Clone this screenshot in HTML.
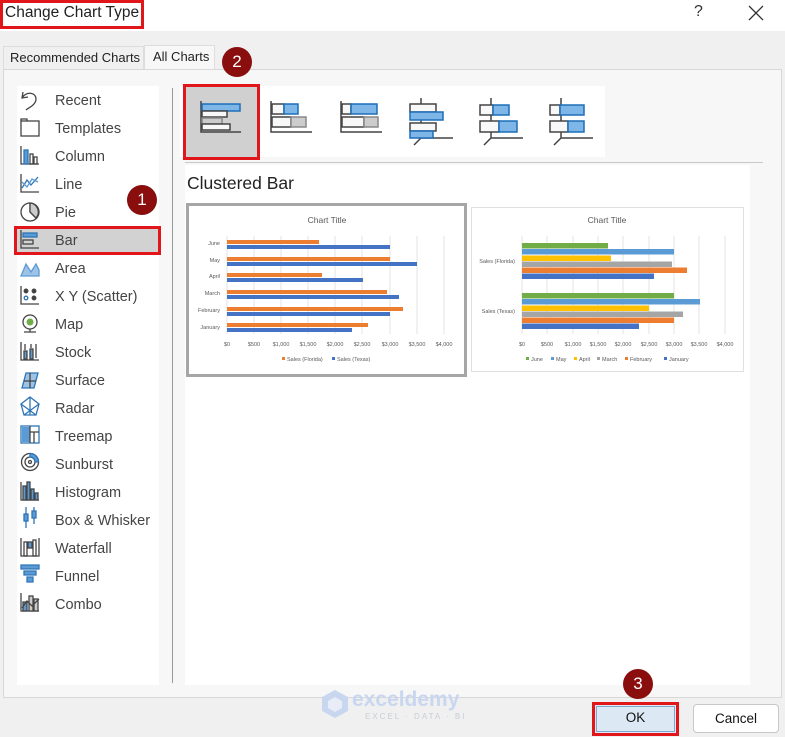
<!DOCTYPE html>
<html><head><meta charset="utf-8"><style>
*{margin:0;padding:0;box-sizing:border-box}
body{width:785px;height:737px;background:#f0f0f0;font-family:"Segoe UI","Liberation Sans",sans-serif;position:relative;overflow:hidden;color:#333}
.abs{position:absolute}
.item{position:absolute;left:55px;font-size:14.5px;color:#444;margin-top:2px}
.badge{position:absolute;width:30px;height:30px;border-radius:50%;background:#8b0e0e;color:#fff;font-size:17px;text-align:center;line-height:30px}
</style></head><body>
<div class="abs" style="left:0;top:0;width:785px;height:31px;background:#fff"></div>
<div class="abs" style="left:0;top:0;width:144px;height:29px;border:3px solid #e0161b"></div>
<div class="abs" style="left:5px;top:4px;font-size:15.5px;color:#222">Change Chart Type</div>
<div class="abs" style="left:694px;top:3px;font-size:16px;color:#333">?</div>
<svg class="abs" style="left:748px;top:5px" width="16" height="16"><path d="M1 1L15 15M15 1L1 15" stroke="#333" stroke-width="1.3"/></svg>

<div class="abs" style="left:3px;top:46px;width:141px;height:23px;background:#f0f0f0;border:1px solid #ddd;border-bottom:none;font-size:13px;color:#222;padding:3px 0 0 6px">Recommended Charts</div>
<div class="abs" style="left:144px;top:45px;width:71px;height:25px;background:#f7f7f7;border:1px solid #ddd;border-bottom:none;font-size:13px;color:#222;padding:3px 0 0 8px">All Charts</div>

<div class="abs" style="left:3px;top:69px;width:779px;height:629px;background:#f7f7f7;border:1px solid #d8d8d8"></div>
<div class="abs" style="left:17px;top:86px;width:142px;height:599px;background:#fff"></div>
<div class="abs" style="left:172px;top:88px;width:1px;height:595px;background:#999"></div>
<div class="abs" style="left:185px;top:165px;width:565px;height:520px;background:#fff"></div>
<div class="abs" style="left:180px;top:86px;width:425px;height:71px;background:#fff"></div>
<div class="abs" style="left:185px;top:162px;width:578px;height:1px;background:#c8c8c8"></div>

<div class="abs" style="left:14px;top:226px;width:147px;height:29px;background:#d2d2d2;border:3px solid #e0161b"></div>
<div class="item" style="top:91px">Recent</div>
<div class="item" style="top:119px">Templates</div>
<div class="item" style="top:147px">Column</div>
<div class="item" style="top:175px">Line</div>
<div class="item" style="top:203px">Pie</div>
<div class="item" style="top:231px">Bar</div>
<div class="item" style="top:259px">Area</div>
<div class="item" style="top:287px">X Y (Scatter)</div>
<div class="item" style="top:315px">Map</div>
<div class="item" style="top:343px">Stock</div>
<div class="item" style="top:371px">Surface</div>
<div class="item" style="top:399px">Radar</div>
<div class="item" style="top:427px">Treemap</div>
<div class="item" style="top:455px">Sunburst</div>
<div class="item" style="top:483px">Histogram</div>
<div class="item" style="top:511px">Box &amp; Whisker</div>
<div class="item" style="top:539px">Waterfall</div>
<div class="item" style="top:567px">Funnel</div>
<div class="item" style="top:595px">Combo</div>

<svg class="abs" style="left:18px;top:88px" width="26" height="530" fill="none" stroke="#444" stroke-width="1.3">
<path d="M5 4L4 10L10 9M4 10C8 3 18 4 18 11C18 17 10 20 8 22"/>
<rect x="3" y="33" width="18" height="15"/><path d="M3 33V31H9V33"/>
<path d="M3 58V76H21"/><rect x="6" y="62" width="4" height="14" fill="#5b9bd5" stroke="#2e75b6"/><rect x="12" y="66" width="3" height="10"/><rect x="16" y="69" width="3" height="7"/>
<path d="M3 86V104H21"/><path d="M4 100L9 92L13 97L20 89" stroke="#2e75b6"/><path d="M4 94L9 99L14 91L20 94" stroke="#5b9bd5"/>
<circle cx="12" cy="124" r="9"/><path d="M12 115V124L18 130"/><path d="M12 124L18 130A9 9 0 0 0 12 115Z" fill="#ccc"/>
<path d="M3 142V160H21"/><rect x="5" y="145" width="14" height="4" fill="#5b9bd5" stroke="#2e75b6"/><rect x="5" y="152" width="10" height="4"/>
<path d="M3 188L8 176L13 184L18 176L21 182V188Z" fill="#9dc3e6" stroke="#5b9bd5"/>
<path d="M3 198V216H21"/><circle cx="8" cy="203" r="1.8" fill="#444"/><circle cx="16" cy="203" r="1.8" fill="#444"/><circle cx="8" cy="210" r="1.8" stroke="#2e75b6"/><circle cx="16" cy="210" r="1.8" fill="#444"/>
<circle cx="12" cy="234" r="7"/><circle cx="12" cy="234" r="3.5" fill="#70ad47" stroke="none"/><path d="M6 244H18M12 241V244"/>
<path d="M3 254V272H21"/><rect x="6" y="263" width="3" height="8" fill="#5b9bd5"/><rect x="12" y="261" width="3" height="10" fill="#5b9bd5"/><path d="M7 256V262M13 256V260M18 256V270"/>
<path d="M4 300L8 285H20L16 300Z" fill="#9dc3e6" stroke="#2e75b6"/><path d="M6 293H18M12 285V300"/>
<path d="M12 309L21 316L18 327H6L3 316Z" stroke="#2e75b6"/><path d="M12 309V327M3 316L18 327M21 316L6 327" stroke="#2e75b6"/>
<rect x="3" y="338" width="18" height="17" stroke="#2e75b6"/><rect x="4" y="339" width="8" height="15" fill="#5b9bd5" stroke="none"/><path d="M12 338V355M12 344H21M16 344V355"/>
<circle cx="12" cy="374" r="8.5"/><circle cx="12" cy="374" r="5"/><path d="M12 365.5A8.5 8.5 0 0 1 20.5 374H17A5 5 0 0 0 12 369Z" fill="#5b9bd5" stroke="#2e75b6"/><circle cx="12" cy="374" r="1.5"/>
<path d="M3 394V412H21"/><rect x="5" y="398" width="3" height="14" fill="#5b9bd5"/><rect x="9" y="394" width="3" height="18" fill="#5b9bd5"/><rect x="13" y="401" width="3" height="11" fill="#5b9bd5"/><rect x="17" y="405" width="3" height="7" fill="#5b9bd5"/>
<path d="M8 419V440M16 419V436" stroke="#2e75b6"/><rect x="6" y="426" width="4" height="7" fill="#5b9bd5" stroke="#2e75b6"/><rect x="14" y="423" width="4" height="7" fill="#5b9bd5" stroke="#2e75b6"/>
<path d="M3 450V468H21V450"/><rect x="6" y="454" width="3" height="14"/><rect x="10" y="454" width="4" height="6" fill="#5b9bd5"/><rect x="15" y="452" width="3" height="16"/>
<path d="M3 477H21V481H3Z M6 483H18V487H6Z M9 489H15V494H9Z" fill="#5b9bd5" stroke="#2e75b6"/>
<path d="M3 505V523H21"/><rect x="5" y="514" width="4" height="9" fill="#5b9bd5"/><rect x="11" y="508" width="4" height="15" fill="#ccc"/><rect x="16" y="511" width="4" height="12" fill="#ccc"/><path d="M4 520L9 513L14 518L21 511"/>
</svg>

<div class="abs" style="left:183px;top:84px;width:77px;height:76px;background:#d0d0d0;border:3px solid #e0161b"></div>
<svg class="abs" style="left:180px;top:86px" width="425" height="71" fill="#f8f8f8" stroke="#444" stroke-width="1.5">
<path d="M21 15V46H61" fill="none"/><rect x="22" y="18" width="38" height="7" fill="#7fb6e8" stroke="#1d6fb8"/><rect x="22" y="25" width="25" height="6"/><rect x="22" y="32" width="20" height="6" fill="#ccc" stroke="#888"/><rect x="22" y="38" width="28" height="6"/>
<path d="M91 15V46H132" fill="none"/><rect x="92" y="18" width="12" height="10"/><rect x="104" y="18" width="14" height="10" fill="#7fb6e8" stroke="#1d6fb8"/><rect x="92" y="31" width="19" height="10"/><rect x="111" y="31" width="15" height="10" fill="#ccc" stroke="#888"/>
<path d="M161 15V46H202" fill="none"/><rect x="162" y="18" width="9" height="10"/><rect x="171" y="18" width="26" height="10" fill="#7fb6e8" stroke="#1d6fb8"/><rect x="162" y="31" width="22" height="10"/><rect x="184" y="31" width="14" height="10" fill="#ccc" stroke="#888"/>
<path d="M241 12V52H273M241 52L234 59" fill="none"/><rect x="230" y="18" width="26" height="8"/><rect x="230" y="26" width="33" height="8" fill="#7fb6e8" stroke="#1d6fb8"/><rect x="230" y="37" width="26" height="8"/><rect x="230" y="45" width="23" height="7" fill="#7fb6e8" stroke="#1d6fb8"/>
<path d="M311 12V52H343M311 52L304 59" fill="none"/><rect x="300" y="19" width="13" height="10"/><rect x="313" y="19" width="16" height="10" fill="#7fb6e8" stroke="#1d6fb8"/><rect x="300" y="35" width="19" height="11"/><rect x="319" y="35" width="18" height="11" fill="#7fb6e8" stroke="#1d6fb8"/>
<path d="M381 12V52H413M381 52L374 59" fill="none"/><rect x="370" y="19" width="10" height="10"/><rect x="380" y="19" width="24" height="10" fill="#7fb6e8" stroke="#1d6fb8"/><rect x="370" y="35" width="18" height="11"/><rect x="388" y="35" width="16" height="11" fill="#7fb6e8" stroke="#1d6fb8"/>
</svg>

<div class="abs" style="left:187px;top:173px;font-size:17.5px;color:#222">Clustered Bar</div>

<div class="abs" style="left:186px;top:203px;width:281px;height:174px;border:3px solid #a6a6a6;background:#fff"></div>
<svg class="abs" style="left:0;top:0" width="785" height="737" font-family="Liberation Sans,sans-serif" font-size="5.5" fill="#595959">
<text x="327" y="223" font-size="8.5" text-anchor="middle">Chart Title</text>
<g stroke="#e3e3e3" stroke-width="1"><path d="M227 236V334M254 236V334M281 236V334M308 236V334M335 236V334M362 236V334M390 236V334M417 236V334M444 236V334"/></g>
<g fill="#ed7d31"><rect x="227" y="240" width="92" height="4"/><rect x="227" y="257" width="163" height="4"/><rect x="227" y="273" width="95" height="4"/><rect x="227" y="290" width="160" height="4"/><rect x="227" y="307" width="176" height="4"/><rect x="227" y="323" width="141" height="4"/></g>
<g fill="#4472c4"><rect x="227" y="245" width="163" height="4"/><rect x="227" y="262" width="190" height="4"/><rect x="227" y="278" width="136" height="4"/><rect x="227" y="295" width="172" height="4"/><rect x="227" y="312" width="163" height="4"/><rect x="227" y="328" width="125" height="4"/></g>
<g text-anchor="end"><text x="220" y="245">June</text><text x="220" y="262">May</text><text x="220" y="278">April</text><text x="220" y="295">March</text><text x="220" y="312">February</text><text x="220" y="329">January</text></g>
<g text-anchor="middle"><text x="227" y="346">$0</text><text x="254" y="346">$500</text><text x="281" y="346">$1,000</text><text x="308" y="346">$1,500</text><text x="335" y="346">$2,000</text><text x="362" y="346">$2,500</text><text x="390" y="346">$3,000</text><text x="417" y="346">$3,500</text><text x="444" y="346">$4,000</text></g>
<rect x="282" y="357" width="3" height="3" fill="#ed7d31"/><text x="287" y="361">Sales (Florida)</text>
<rect x="332" y="357" width="3" height="3" fill="#4472c4"/><text x="337" y="361">Sales (Texas)</text>

<rect x="471.5" y="207.5" width="272" height="164" fill="#fff" stroke="#e0e0e0"/>
<text x="607" y="223" font-size="8.5" text-anchor="middle">Chart Title</text>
<g stroke="#e3e3e3"><path d="M522 236V334M547 236V334M573 236V334M598 236V334M623 236V334M649 236V334M674 236V334M699 236V334M725 236V334"/></g>
<g><rect x="522" y="243" width="86" height="5.5" fill="#70ad47"/><rect x="522" y="249" width="152" height="5.5" fill="#5b9bd5"/><rect x="522" y="255.5" width="89" height="5.5" fill="#ffc000"/><rect x="522" y="261.5" width="150" height="5.5" fill="#a5a5a5"/><rect x="522" y="267.5" width="165" height="5.5" fill="#ed7d31"/><rect x="522" y="273.5" width="132" height="5.5" fill="#4472c4"/>
<rect x="522" y="293" width="152" height="5.5" fill="#70ad47"/><rect x="522" y="299" width="178" height="5.5" fill="#5b9bd5"/><rect x="522" y="305.5" width="127" height="5.5" fill="#ffc000"/><rect x="522" y="311.5" width="161" height="5.5" fill="#a5a5a5"/><rect x="522" y="317.5" width="152" height="5.5" fill="#ed7d31"/><rect x="522" y="323.5" width="117" height="5.5" fill="#4472c4"/></g>
<g text-anchor="end"><text x="515" y="263">Sales (Florida)</text><text x="515" y="313">Sales (Texas)</text></g>
<g text-anchor="middle"><text x="522" y="346">$0</text><text x="547" y="346">$500</text><text x="573" y="346">$1,000</text><text x="598" y="346">$1,500</text><text x="623" y="346">$2,000</text><text x="649" y="346">$2,500</text><text x="674" y="346">$3,000</text><text x="699" y="346">$3,500</text><text x="725" y="346">$4,000</text></g>
<rect x="526" y="357" width="3" height="3" fill="#70ad47"/><text x="531" y="361">June</text>
<rect x="551" y="357" width="3" height="3" fill="#5b9bd5"/><text x="556" y="361">May</text>
<rect x="574" y="357" width="3" height="3" fill="#ffc000"/><text x="579" y="361">April</text>
<rect x="597" y="357" width="3" height="3" fill="#a5a5a5"/><text x="602" y="361">March</text>
<rect x="625" y="357" width="3" height="3" fill="#ed7d31"/><text x="630" y="361">February</text>
<rect x="664" y="357" width="3" height="3" fill="#4472c4"/><text x="669" y="361">January</text>
</svg>

<svg class="abs" style="left:320px;top:689px" width="30" height="30"><path d="M15 1L28 8V22L15 29L2 22V8Z" fill="#c9d6ef"/><path d="M15 8L22 12V19L15 23L8 19V12Z" fill="#e8edf7"/></svg>
<div class="abs" style="left:352px;top:688px;font-size:21px;font-weight:bold;color:#c9d6ef">exceldemy</div>
<div class="abs" style="left:365px;top:712px;font-size:8px;letter-spacing:2px;color:#c8cdd6">EXCEL · DATA · BI</div>

<div class="abs" style="left:592px;top:702px;width:87px;height:34px;border:3px solid #e0161b;background:#dce8f3"></div>
<div class="abs" style="left:596px;top:706px;width:79px;height:26px;border:1px solid #7ea6cf"></div>
<div class="abs" style="left:592px;top:710px;width:87px;text-align:center;font-size:13.5px;color:#111">OK</div>
<div class="abs" style="left:693px;top:704px;width:86px;height:29px;border:1px solid #c8c8c8;border-radius:4px;background:#fff;text-align:center;font-size:13.5px;line-height:27px;color:#111">Cancel</div>

<div class="badge" style="left:127px;top:185px">1</div>
<div class="badge" style="left:222px;top:47px">2</div>
<div class="badge" style="left:623px;top:669px">3</div>
</body></html>
